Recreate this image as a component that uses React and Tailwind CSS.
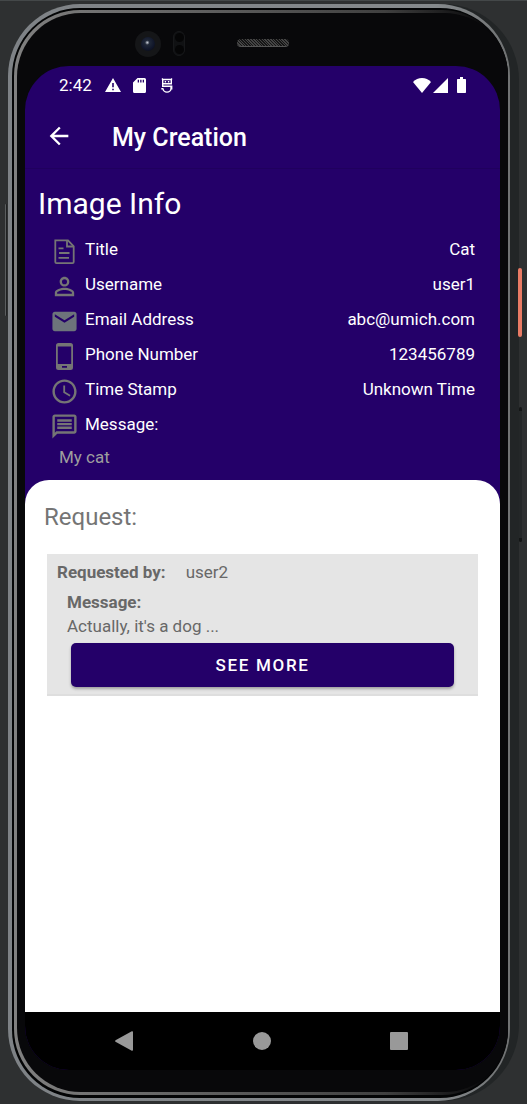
import React from "react";
import {
  MdArrowBack,
  MdEmail,
  MdAccessTime,
  MdOutlineMessage,
  MdPersonOutline,
} from "react-icons/md";

function DocumentIcon() {
  return (
    <svg viewBox="0 0 29 29" className="size-[29px]" fill="none" stroke="currentColor" strokeWidth="1.8">
      <path d="M5.300 3.300H18l5.700 6V25a1.200 1.200 0 0 1-1.200 1.200h-16A1.200 1.200 0 0 1 5.300 25Z" />
      <path d="M17 3.300v6.200h6.700M8.500 11.400h5M9 16h10.500M8.500 20.800h10.500" />
    </svg>
  );
}

function PhoneIcon() {
  return (
    <svg viewBox="0 0 29 29" className="size-[29px]" fill="currentColor" fillRule="evenodd">
      <path d="M8.500 1h12A2.500 2.500 0 0 1 23 3.500v22a2.500 2.500 0 0 1-2.500 2.500h-12A2.500 2.500 0 0 1 6 25.500v-22A2.500 2.500 0 0 1 8.500 1Zm-.7 3.500v17.500h13.400V4.500ZM12 24v1.700h5V24Z" />
    </svg>
  );
}

const details = [
  { label: "Title", value: "Cat", icon: <DocumentIcon /> },
  { label: "Username", value: "user1", icon: <MdPersonOutline size={29} /> },
  { label: "Email Address", value: "abc@umich.com", icon: <MdEmail size={29} className="text-[#6d747b]" /> },
  { label: "Phone Number", value: "123456789", icon: <PhoneIcon /> },
  { label: "Time Stamp", value: "Unknown Time", icon: <MdAccessTime size={29} /> },
  { label: "Message:", value: "", icon: <MdOutlineMessage size={29} /> },
];

function StatusBar() {
  return (
    <div className="flex h-[38px] items-center justify-between pl-[34px] pr-[34px] text-white">
      <div className="flex items-center">
        <span className="w-[46px] text-[17px] leading-5">2:42</span>
        <svg viewBox="0 0 16 14" className="h-[14px] w-4" fill="currentColor" fillRule="evenodd">
          <path d="M8 0l8 14H0ZM7.200 5v4.300h1.600V5Zm0 5.700v1.600h1.600v-1.600Z" />
        </svg>
        <svg viewBox="0 0 13 15" className="ml-3 h-[15px] w-[13px]" fill="currentColor" fillRule="evenodd">
          <path d="M4.500 0h7A1.500 1.500 0 0 1 13 1.500v12a1.500 1.500 0 0 1-1.500 1.500h-10A1.500 1.500 0 0 1 0 13.500v-9ZM4.700 1.700v2.800H6V1.700Zm2.500 0v2.800h1.300V1.700Zm2.500 0v2.800H11V1.700Z" />
        </svg>
        <svg viewBox="0 0 12 15" className="ml-[15px] h-[15px] w-3" fill="none" stroke="currentColor" strokeWidth="1.400">
          <path d="M1.700 5.800V1.500h8.600v4.300ZM1 .5l1 1.200M11 .5l-1 1.200" />
          <path d="M3.700 3.800h1.400M6.900 3.800h1.400" />
          <path d="M1.700 5.800v2.400h9v3.300M2 10.500a4 3.600 0 0 0 8 0V8.200M.3 10.700h1.900" />
        </svg>
      </div>
      <div className="flex items-center">
        <svg viewBox="0 0 18 15" className="h-[15px] w-[18px]" fill="currentColor">
          <path d="M9 15L0 4C2.500 1.500 5.500 0 9 0s6.500 1.500 9 4Z" />
        </svg>
        <svg viewBox="0 0 15 15" className="ml-[2px] size-[15px]" fill="currentColor">
          <path d="M15 0v15H0Z" />
        </svg>
        <svg viewBox="0 0 9 16" className="ml-[9px] h-4 w-[9px]" fill="currentColor">
          <path d="M3 0h3v2h2.300a.7.7 0 0 1 .7.7v12.600a.7.7 0 0 1-.7.7H.7a.7.7 0 0 1-.7-.7V2.700A.7.7 0 0 1 .7 2H3Z" />
        </svg>
      </div>
    </div>
  );
}

function ImageInfo() {
  return (
    <section className="pl-[13px] pr-[25px] text-white">
      <h2 className="text-[30px] leading-9">Image Info</h2>
      <dl className="mt-3 pl-3">
        {details.map((item) => (
          <div key={item.label} className="flex h-[35px] items-center">
            <span className="text-[#757575]">{item.icon}</span>
            <dt className="flex-1 pb-[5px] pl-[6px]">{item.label}</dt>
            <dd className="pb-[5px]">{item.value}</dd>
          </div>
        ))}
      </dl>
      <p className="mt-[3px] pl-[21px] text-[#9e9e9e]">My cat</p>
    </section>
  );
}

function Requests() {
  return (
    <section className="mt-[13px] flex-1 rounded-t-3xl bg-white px-[22px] pt-[22px] text-[#757575]">
      <h2 className="-ml-[3px] text-[24px] leading-[30px]">Request:</h2>
      <article className="mt-[22px] border-b-2 border-[#dedede] bg-[#e5e5e5] px-[10px] pb-[7px] pt-2 text-[#686868]">
        <div className="flex gap-5">
          <span className="font-bold">Requested by:</span>
          <span>user2</span>
        </div>
        <div className="mt-2 pl-[10px] leading-6">
          <h3 className="font-bold">Message:</h3>
          <p>Actually, it's a dog ...</p>
        </div>
        <div className="px-[14px] pt-[5px]">
          <button
            type="button"
            className="h-11 w-full rounded-[5px] bg-[#240069] text-[17px] font-medium tracking-widest text-white shadow-[0_2px_3px_rgba(0,0,0,0.3)]"
          >
            SEE MORE
          </button>
        </div>
      </article>
    </section>
  );
}

function NavigationBar() {
  return (
    <nav className="flex h-[58px] items-center justify-between bg-black pl-[90px] pr-[92px] text-[#999999]">
      <button type="button" aria-label="Back">
        <svg viewBox="0 0 18 20" className="h-5 w-[18px]" fill="currentColor">
          <path d="M16.800.200Q18 0 18 1v18q0 1-1.200.8L.5 10.800Q-.2 10 .5 9.200Z" />
        </svg>
      </button>
      <button type="button" aria-label="Home" className="size-[18px] rounded-full bg-[#999999]" />
      <button type="button" aria-label="Overview" className="size-[18px] rounded-[1px] bg-[#999999]" />
    </nav>
  );
}

function Screen() {
  return (
    <main className="flex flex-1 flex-col overflow-hidden rounded-[44px] bg-[#240069] font-['Roboto',sans-serif] text-[17px] leading-5">
      <StatusBar />
      <header className="flex h-16 items-center pl-5 text-white">
        <button type="button" aria-label="Navigate up">
          <MdArrowBack size={28} />
        </button>
        <h1 className="ml-[39px] pt-1 text-[25px] font-medium leading-7">My Creation</h1>
      </header>
      <div className="h-[18px] border-t border-[#20005e]" />
      <ImageInfo />
      <Requests />
      <NavigationBar />
    </main>
  );
}

export default function App() {
  return (
    <div className="flex min-h-screen flex-col border-t border-[#444849] bg-[#2e3031] px-2 py-[3px]">
      <div className="relative flex flex-1 flex-col rounded-[76px] bg-[#222526] pr-[9px]">
        <div className="absolute -right-[3px] top-[264px] h-[69px] w-1 rounded-sm bg-[#e97b65]" />
        <div className="absolute -right-[3px] top-[403px] h-[135px] w-[3px] rounded-sm border-y-4 border-[#141616] bg-[#242728]" />
        <div className="absolute -left-[3px] top-[200px] h-[112px] w-[2px] rounded-sm border-l border-[#5b5e5f] bg-[#202223]" />
        <div className="flex flex-1 flex-col rounded-[72px] bg-[linear-gradient(90deg,#7e8286_0%,#85898c_85%,#707273_100%)] pb-[3px] pl-1 pr-[2px] pt-1">
          <div className="flex flex-1 flex-col rounded-[68px] bg-[#030405] pb-[3px] pl-[2px] pt-[2px]">
            <div className="flex flex-1 flex-col rounded-[66px] bg-[linear-gradient(90deg,#808080_0%,#555555_50%,#404040_75%,#08080a_95%)] pb-[3px] pl-[3px] pt-[3px]">
              <div className="flex flex-1 flex-col rounded-[64px] bg-[#08080a] px-2 pb-[22px]">
                <div className="relative flex h-[53px] items-center justify-center">
                  <div className="absolute left-[110px] top-[18px] flex size-[26px] items-center justify-center rounded-full bg-[#151618]">
                    <span className="size-[14px] rounded-full bg-[radial-gradient(circle_at_45%_40%,#d0d5df_0%,#202838_20%,#10162a_60%,#08080a_100%)]" />
                  </div>
                  <div className="absolute left-[148px] top-[18px] flex h-[25px] w-3 flex-col items-center justify-between rounded-full border border-[#17181a] bg-[#101113] py-px">
                    <span className="size-[9px] rounded-full bg-[#050506]" />
                    <span className="size-[9px] rounded-full bg-[#050506]" />
                  </div>
                  <div className="mt-[7px] h-2 w-[52px] rounded-full border-b border-[#555555] bg-[repeating-linear-gradient(45deg,#444444_0_1px,#151515_1px_2px)]" />
                </div>
                <Screen />
              </div>
            </div>
          </div>
        </div>
      </div>
    </div>
  );
}
